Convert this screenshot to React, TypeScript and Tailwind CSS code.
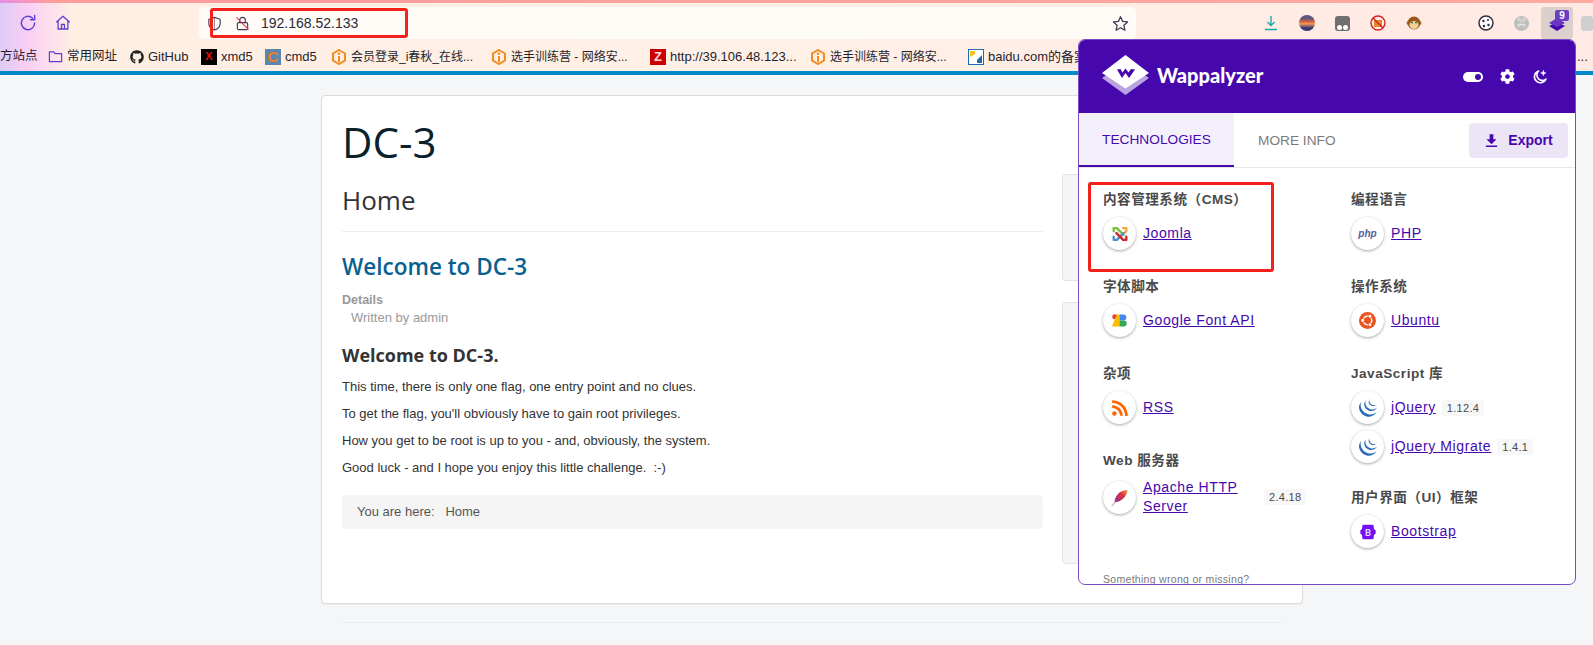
import React from 'react';
import { FaGithub, FaRss } from 'react-icons/fa';
import { SiJquery } from 'react-icons/si';

const ICHUNQIU = (
    <svg viewBox="0 0 16 16" className="h-[16px] w-[16px] shrink-0">
        <path d="M8 1 14 4.500V11.500L8 15 2 11.500V4.500Z" fill="none" stroke="#f58a1f" strokeWidth="2" />
        <rect x="7" y="7" width="2" height="6" fill="#f58a1f" />
        <circle cx="8" cy="4.800" r="1.300" fill="#f58a1f" />
    </svg>
);

const Bookmark: React.FC<{ icon: React.ReactNode; label: string; className?: string; labelClass?: string }> = ({ icon, label, className, labelClass }) => (
    <div className={`flex shrink-0 items-center gap-[4px] ${className ?? ''}`}>
        {icon}
        <span className={`whitespace-nowrap ${labelClass ?? ''}`}>{label}</span>
    </div>
);

const Chip: React.FC<{ children: React.ReactNode }> = ({ children }) => (
    <div className="flex h-[33px] w-[33px] shrink-0 items-center justify-center rounded-full bg-white shadow-[0_1px_3px_rgba(0,0,0,0.35)]">
        {children}
    </div>
);

const JoomlaIcon = () => (
    <svg viewBox="0 0 20 20" className="h-[18px] w-[18px]" fill="none" strokeWidth="2.700" strokeLinecap="round" strokeLinejoin="round">
        <path d="M3 7V3.500H6.500L14 11" stroke="#7ac143" />
        <path d="M13.500 3.500H17V7L9 14" stroke="#f9a541" />
        <path d="M3 13V16.500H6.500L14 9" stroke="#5091cd" />
        <path d="M6 9 13.500 16.500H17V13" stroke="#c8282d" />
    </svg>
);

const GoogleFontIcon = () => (
    <svg viewBox="0 0 20 20" className="h-[17px] w-[17px]">
        <circle cx="4.500" cy="5.500" r="3" fill="#ea4335" />
        <path d="M1 17 7 3H10V17Z" fill="#fbbc04" />
        <path d="M10 3H14.500A3.500 3.500 0 0 1 14.500 10H10Z" fill="#4285f4" />
        <path d="M10 10H15A3.500 3.500 0 0 1 15 17H10Z" fill="#34a853" />
    </svg>
);

const UbuntuIcon = () => (
    <svg viewBox="0 0 20 20" className="h-[17px] w-[17px]">
        <circle cx="10" cy="10" r="10" fill="#e95420" />
        <circle cx="10" cy="10" r="5" fill="none" stroke="#fff" strokeWidth="1.800" />
        <circle cx="4.300" cy="10" r="2.700" fill="#e95420" />
        <circle cx="12.900" cy="5" r="2.700" fill="#e95420" />
        <circle cx="12.900" cy="15" r="2.700" fill="#e95420" />
        <circle cx="4.300" cy="10" r="1.700" fill="#fff" />
        <circle cx="12.900" cy="5" r="1.700" fill="#fff" />
        <circle cx="12.900" cy="15" r="1.700" fill="#fff" />
    </svg>
);

const FeatherIcon = () => (
    <svg viewBox="0 0 20 20" className="h-[19px] w-[19px]">
        <defs>
            <linearGradient id="feather" x1="0" y1="1" x2="1" y2="0">
                <stop offset="0" stopColor="#8e2a8a" />
                <stop offset="0.6" stopColor="#e0313a" />
                <stop offset="1" stopColor="#f8a13a" />
            </linearGradient>
        </defs>
        <path d="M18.500 2C13 2 8 5 6 10 5 12 4.800 13 5 15 8 15 11.500 13.500 14 11 16 9 18 6 18.500 2Z" fill="url(#feather)" />
        <path d="M11 8 2 19" stroke="#b25aa8" strokeWidth="0.800" />
    </svg>
);

const BootstrapIcon = () => (
    <svg viewBox="0 0 20 20" className="h-[18px] w-[18px]">
        <path d="M5 2H15C16 2 16.400 3 16.400 4.500 16.400 6.500 17 7.500 18.500 8V12C17 12.500 16.400 13.500 16.400 15.500 16.400 17 16 18 15 18H5C4 18 3.600 17 3.600 15.500 3.600 13.500 3 12.500 1.500 12V8C3 7.500 3.600 6.500 3.600 4.500 3.600 3 4 2 5 2Z" fill="#7211f3" />
        <text x="10" y="14" textAnchor="middle" fontSize="10.500" fontWeight="700" fill="#e3d2fb" fontFamily="Roboto, sans-serif">B</text>
    </svg>
);

const Tech: React.FC<{ icon: React.ReactNode; version?: string; children: React.ReactNode }> = ({ icon, version, children }) => (
    <div className="flex items-center">
        <Chip>{icon}</Chip>
        <a className="ml-[7px] text-[14px] leading-[19px] tracking-[0.6px] text-[#4608ad] underline">{children}</a>
        {version && (
            <span className="ml-[6px] rounded-[3px] bg-[#f7f7f7] px-[5px] text-[11px] leading-[16px] tracking-[0.3px] text-[#4a4a4a]">{version}</span>
        )}
    </div>
);

const Group: React.FC<{ title: string; children: React.ReactNode; className?: string }> = ({ title, children, className }) => (
    <div className={className}>
        <div className="mb-[8px] h-[18px] whitespace-nowrap text-[13.600px] font-bold leading-[18px] tracking-[0.5px] text-[#4a4a4a]">{title}</div>
        <div className="flex flex-col gap-[6px]">{children}</div>
    </div>
);

const Popup = () => (
    <div className="absolute left-[1078px] top-[39px] flex h-[546px] w-[498px] flex-col overflow-hidden rounded-[7px] border border-[#7a4bc6] bg-white">
        <div className="flex h-[73px] shrink-0 items-center bg-[#4608ad] pb-[3px] pl-[23px] pr-[27px]">
            <svg viewBox="0 0 47 40" className="h-[40px] w-[47px]">
                <path d="M0 23 23.500 40 47 23 23.500 7Z" fill="#b9a3e0" />
                <path d="M23.500 0 47 18 23.500 33.500 0 18Z" fill="#fff" />
                <path d="M15 14.500 20 23 23.500 18 27 23 33 14.500 29 14 26.500 17.500 23.500 13.500 20.500 17.500 18.500 14Z" fill="#4608ad" />
            </svg>
            <span className="ml-[8px] font-['Lato',sans-serif] text-[20px] font-black leading-none text-white">Wappalyzer</span>
            <div className="ml-auto flex items-center gap-[17px] pt-[3px]">
                <div className="flex h-[10px] w-[20px] items-center justify-end rounded-full bg-white pr-[2px]">
                    <div className="h-[6px] w-[6px] rounded-full bg-[#4608ad]" />
                </div>
                <svg viewBox="0 0 512 512" className="h-[15px] w-[15px]" fill="#fff">
                    <path d="M487 316l-43-25c4-23 4-47 0-70l43-25c5-3 7-9 6-14-11-36-30-68-55-95-4-4-10-5-15-2l-43 25c-18-16-39-28-61-36V24c0-6-4-11-9-12-37-8-75-8-111 0-5 1-9 6-9 12v50c-22 8-43 20-61 36L86 85c-5-3-11-2-15 2-25 27-44 59-55 95-2 5 1 11 6 14l43 25c-4 23-4 47 0 70l-43 25c-5 3-8 9-6 14 11 36 30 68 55 95 4 4 10 5 15 2l43-25c18 16 39 28 61 36v50c0 6 4 11 9 12 37 8 75 8 111 0 5-1 9-6 9-12v-50c22-8 43-20 61-36l43 25c5 3 11 2 15-2 25-27 44-59 55-95 1-5-1-11-6-14zM256 336c-44 0-80-36-80-80s36-80 80-80 80 36 80 80-36 80-80 80z" />
                </svg>
                <svg viewBox="0 0 24 24" className="h-[16px] w-[16px]" fill="none" stroke="#fff" strokeWidth="2.400" strokeLinejoin="round">
                    <path d="M10 3A9 9 0 1 0 21 15 8 8 0 0 1 10 3Z" />
                    <path d="M17 2 18 5 21 6 18 7 17 10 16 7 13 6 16 5Z" fill="#fff" strokeWidth="0.800" />
                </svg>
            </div>
        </div>
        <div className="flex h-[55px] shrink-0 items-stretch border-b border-[#e6e6e6]">
            <div className="flex w-[155px] items-center justify-center border-b-2 border-[#4608ad] bg-[#f3f0fb] pt-[2px] text-[13.700px] text-[#4608ad]">TECHNOLOGIES</div>
            <div className="flex items-center pl-[24px] pt-[2px] text-[13.700px] text-[#7a7a7a]">MORE INFO</div>
            <div className="ml-auto mr-[7px] mt-[10px] flex h-[35px] w-[99px] items-center justify-center gap-[9px] rounded-[4px] bg-[#ece5f6] text-[14px] font-bold text-[#4608ad]">
                <svg viewBox="0 0 24 24" className="h-[15px] w-[15px]" fill="#4608ad">
                    <path d="M9 2H15V10H20L12 18 4 10H9ZM3 20H21V22.500H3Z" />
                </svg>
                Export
            </div>
        </div>
        <div className="grid grid-cols-[248px_1fr] pl-[24px] pt-[23px]">
            <div className="flex flex-col">
                <Group title="内容管理系统（CMS）" className="h-[87px]">
                    <Tech icon={<JoomlaIcon />}>Joomla</Tech>
                </Group>
                <Group title="字体脚本" className="h-[87px]">
                    <Tech icon={<GoogleFontIcon />}>Google Font API</Tech>
                </Group>
                <Group title="杂项" className="h-[87px]">
                    <Tech icon={<FaRss className="h-[18px] w-[18px] text-[#ff6600]" />}>RSS</Tech>
                </Group>
                <Group title="Web 服务器">
                    <div className="flex items-center">
                        <Chip><FeatherIcon /></Chip>
                        <a className="ml-[7px] w-[108px] text-[14px] leading-[19px] tracking-[0.6px] text-[#4608ad] underline">Apache HTTP Server</a>
                        <span className="ml-[13px] rounded-[3px] bg-[#f7f7f7] px-[5px] text-[11px] leading-[16px] tracking-[0.3px] text-[#4a4a4a]">2.4.18</span>
                    </div>
                </Group>
            </div>
            <div className="flex flex-col">
                <Group title="编程语言" className="h-[87px]">
                    <Tech icon={<span className="text-[10px] font-bold italic text-[#5a5f99]">php</span>}>PHP</Tech>
                </Group>
                <Group title="操作系统" className="h-[87px]">
                    <Tech icon={<UbuntuIcon />}>Ubuntu</Tech>
                </Group>
                <Group title="JavaScript 库" className="h-[124px]">
                    <Tech icon={<SiJquery className="h-[18px] w-[18px] text-[#2a6ab8]" />} version="1.12.4">jQuery</Tech>
                    <Tech icon={<SiJquery className="h-[18px] w-[18px] text-[#2a6ab8]" />} version="1.4.1">jQuery Migrate</Tech>
                </Group>
                <Group title="用户界面（UI）框架">
                    <Tech icon={<BootstrapIcon />}>Bootstrap</Tech>
                </Group>
            </div>
        </div>
        <div className="mt-[24px] pl-[24px] text-[10.500px] leading-[14px] tracking-[0.3px] text-[#7a7a7a]">Something wrong or missing?</div>
    </div>
);

const Toolbar = () => (
    <div className="relative flex h-[32px] shrink-0 items-center">
        <svg viewBox="0 0 24 24" className="ml-[18px] h-[20px] w-[20px]" fill="none" stroke="#5b3fd6" strokeWidth="1.700" strokeLinecap="round" strokeLinejoin="round">
            <path d="M20 12A8 8 0 1 1 17.500 6.200" />
            <path d="M20 3V8H15" />
        </svg>
        <svg viewBox="0 0 24 24" className="ml-[16px] h-[18px] w-[18px]" fill="none" stroke="#5b3fd6" strokeWidth="1.700" strokeLinejoin="round">
            <path d="M3 11 12 3 21 11M5.500 9V20H18.500V9" />
            <path d="M10 20V14H14V20" />
        </svg>
        <div className="ml-[127px] flex h-[32px] w-[938px] items-center rounded-[5px] bg-[#fffbf7] pl-[8px]">
            <svg viewBox="0 0 16 16" className="h-[15px] w-[15px]" fill="none" stroke="#3c3a55" strokeWidth="1.200">
                <path d="M8 1.500 14 3.500V8C14 11.500 11 14 8 15 5 14 2 11.500 2 8V3.500Z" />
                <path d="M8 1.500V15" strokeWidth="0.600" />
            </svg>
            <svg viewBox="0 0 16 16" className="ml-[13px] h-[15px] w-[15px]" fill="none" stroke="#3c3a55" strokeWidth="1.200">
                <rect x="2.500" y="7" width="11" height="7.500" rx="1.500" />
                <path d="M5 7V4.500A3 3 0 0 1 11 4.500V7" />
                <path d="M1.500 1.500 14.500 14.500" stroke="#e8335a" strokeWidth="1.100" />
            </svg>
            <span className="ml-[11px] text-[14px] text-[#2a2a3a]">192.168.52.133</span>
            <svg viewBox="0 0 24 24" className="ml-auto mr-[7px] h-[17px] w-[17px]" fill="none" stroke="#3c3a55" strokeWidth="1.800" strokeLinejoin="round">
                <path d="M12 2.500 15 9 22 9.800 16.800 14.500 18.200 21.500 12 18 5.800 21.500 7.200 14.500 2 9.800 9 9Z" />
            </svg>
        </div>
        <svg viewBox="0 0 16 16" className="ml-[127px] h-[16px] w-[16px]" fill="none" stroke="#12a9a9" strokeWidth="1.300">
            <path d="M8 1V10M4.500 7 8 10.500 11.500 7M2 14.500H14" />
        </svg>
        <div className="ml-[20px] h-[16px] w-[16px] rounded-full bg-[linear-gradient(#59577e_20%,#e2693a_45%,#f0a060_55%,#3a3a70_80%)]" />
        <div className="ml-[20px] flex h-[15px] w-[15px] items-end justify-center gap-px rounded-[3px] bg-[#6f6f6f] pb-px">
            <div className="h-[5px] w-[5px] rounded-full bg-white" />
            <div className="h-[5px] w-[5px] rounded-full bg-white" />
        </div>
        <svg viewBox="0 0 16 16" className="ml-[20px] h-[16px] w-[16px]">
            <rect x="4" y="5" width="8" height="7" fill="#e08a2a" />
            <circle cx="8" cy="8" r="7" fill="none" stroke="#d81f26" strokeWidth="1.400" />
            <path d="M3 3 13 13" stroke="#d81f26" strokeWidth="1.400" />
        </svg>
        <svg viewBox="0 0 16 16" className="ml-[20px] h-[16px] w-[16px]">
            <circle cx="2.500" cy="8" r="2" fill="#b5702a" />
            <circle cx="13.500" cy="8" r="2" fill="#b5702a" />
            <circle cx="8" cy="8" r="6.500" fill="#9a5a1e" />
            <ellipse cx="8" cy="10" rx="4.500" ry="4" fill="#f0d29a" />
            <circle cx="6" cy="7.500" r="1" fill="#3c7a50" />
            <circle cx="10" cy="7.500" r="1" fill="#3c7a50" />
        </svg>
        <svg viewBox="0 0 16 16" className="ml-[56px] h-[16px] w-[16px]">
            <circle cx="8" cy="8" r="7" fill="#fff" stroke="#33303a" strokeWidth="1.500" />
            <circle cx="5.500" cy="6" r="1.200" fill="#33303a" />
            <circle cx="10" cy="5" r="1" fill="#33303a" />
            <circle cx="6" cy="11" r="1.200" fill="#33303a" />
            <circle cx="10.500" cy="10" r="1.200" fill="#33303a" />
        </svg>
        <div className="ml-[20px] flex h-[15px] w-[15px] items-center justify-center rounded-full bg-[#bdbdbd] text-[9px] leading-none text-white">⌘</div>
        <div className="relative ml-[12px] h-[32px] w-[32px] shrink-0 rounded-[3px] bg-[#dcd0cc]">
            <svg viewBox="0 0 16 14" className="absolute left-[8px] top-[10px] h-[14px] w-[16px]" fill="#4608ad">
                <path d="M8 5 16 9 8 14 0 9Z" />
                <path d="M8 1 16 6 8 10 0 6Z" fill="#6a35c0" />
            </svg>
            <div className="absolute left-[14px] top-[3px] h-[11px] w-[14px] rounded-[2px] bg-[#6b3fc4] text-center text-[10px] font-bold leading-[11px] text-white">9</div>
        </div>
        <div className="ml-[8px] h-[15px] w-[12px] shrink-0 rounded-[3px] bg-[#cfcfcf]" />
    </div>
);

const Bookmarks = () => (
    <div className="relative flex h-[32px] shrink-0 items-center overflow-hidden whitespace-nowrap pt-[3px] text-[13px] text-[#1f1f2e]">
        <span className="w-[48px] shrink-0 text-[12.500px]">方站点</span>
        <Bookmark
            icon={
                <svg viewBox="0 0 16 16" className="h-[15px] w-[15px]" fill="none" stroke="#5b3fd6" strokeWidth="1.300" strokeLinejoin="round">
                    <path d="M1.500 3H6L7.500 5H14.500V13.500H1.500Z" />
                </svg>
            }
            label="常用网址"
            labelClass="text-[12.500px]"
            className="w-[82px]"
        />
        <Bookmark icon={<FaGithub className="h-[14px] w-[14px] text-[#222]" />} label="GitHub" className="w-[71px]" />
        <Bookmark
            icon={
                <div className="flex h-[16px] w-[16px] items-center justify-center bg-black text-[11px] font-bold leading-none text-[#e01010]">X</div>
            }
            label="xmd5"
            className="w-[64px]"
        />
        <Bookmark
            icon={
                <div className="flex h-[16px] w-[16px] items-center justify-center bg-[#5d87ae] text-[15px] font-bold leading-none text-[#f57c1f]">C</div>
            }
            label="cmd5"
            className="w-[66px]"
        />
        <Bookmark icon={ICHUNQIU} label="会员登录_i春秋_在线..." labelClass="text-[12px]" className="w-[160px]" />
        <Bookmark icon={ICHUNQIU} label="选手训练营 - 网络安..." labelClass="text-[12px]" className="w-[159px]" />
        <Bookmark
            icon={
                <div className="flex h-[16px] w-[16px] items-center justify-center bg-[#cc0000] text-[13px] font-bold leading-none text-[#ffd8d8]">Z</div>
            }
            label="http://39.106.48.123..."
            className="w-[160px]"
        />
        <Bookmark icon={ICHUNQIU} label="选手训练营 - 网络安..." labelClass="text-[12px]" className="w-[158px]" />
        <Bookmark
            icon={
                <svg viewBox="0 0 16 16" className="h-[16px] w-[16px]">
                    <rect x="0.500" y="0.500" width="15" height="15" fill="#fff" stroke="#1e6bb0" />
                    <path d="M2 2H7V5L2 8Z" fill="#f5c518" />
                    <path d="M14 6V14H9V11Z" fill="#1e6bb0" />
                    <path d="M7 2H9V14H7Z" fill="#fff" />
                </svg>
            }
            label="baidu.com的备案"
        />
        <span className="absolute left-[1577px]">...</span>
    </div>
);

const ContentCard = () => (
    <div className="ml-[321px] flex h-[509px] w-[982px] gap-[19px] rounded-[4px] border border-[#dcdcdc] bg-white p-[20px] shadow-[0_1px_1px_rgba(0,0,0,0.05)]">
        <div className="w-[701px] shrink-0 text-[13px] text-[#333]">
            <h1 className="-mt-[2px] font-['Open_Sans',sans-serif] text-[42px] leading-[56px] text-[#0b1f2c]">DC-3</h1>
            <h2 className="mt-[14px] border-b border-[#eeeeee] pb-[15px] font-['Open_Sans',sans-serif] text-[26px] font-medium leading-[32px] text-[#333]">Home</h2>
            <h3 className="mt-[19px] font-['Open_Sans',sans-serif] text-[22.500px] font-semibold leading-[32px] text-[#08618d]">Welcome to DC-3</h3>
            <div className="mt-[8px] text-[12.500px] font-bold leading-[18px] text-[#999]">Details</div>
            <div className="pl-[9px] leading-[18px] text-[#999]">Written by admin</div>
            <h4 className="mt-[16px] font-['Open_Sans',sans-serif] text-[18px] font-bold leading-[24px] text-[#333]">Welcome to DC-3.</h4>
            <div className="mt-[11px] flex flex-col gap-[9px] leading-[18px]">
                <p>This time, there is only one flag, one entry point and no clues.</p>
                <p>To get the flag, you&apos;ll obviously have to gain root privileges.</p>
                <p>How you get to be root is up to you - and, obviously, the system.</p>
                <p>Good luck - and I hope you enjoy this little challenge.&nbsp; :-)</p>
            </div>
            <div className="mt-[18px] flex h-[34px] items-center rounded-[4px] bg-[#f5f5f5] pl-[15px] text-[#555]">
                You are here:&nbsp;&nbsp; Home
            </div>
        </div>
        <div className="flex w-[220px] shrink-0 flex-col gap-[21px] pt-[58px]">
            <div className="h-[107px] rounded-[4px] border border-[#e3e3e3] bg-[#f5f5f5]" />
            <div className="h-[262px] rounded-[4px] border border-[#e3e3e3] bg-[#f5f5f5]" />
        </div>
    </div>
);

export default function App() {
    return (
        <div className="relative flex h-screen w-full flex-col overflow-hidden bg-[#f4f6f8] font-['Liberation_Sans','Noto_Sans_CJK_SC',sans-serif]">
            <div className="h-[3px] shrink-0 bg-[linear-gradient(90deg,#e58fe6_0,#ff9c9c_3%,#ffa9a1_100%)]" />
            <div className="flex shrink-0 flex-col bg-[linear-gradient(90deg,#dccdf6_0,#f7cdf4_24px,#fcd9f0_42px,#ffeee2_72px,#fff0e6_50%,#ffe9e4_100%)]">
                <div className="h-[4px] shrink-0" />
                <Toolbar />
                <Bookmarks />
            </div>
            <div className="h-[4px] shrink-0 bg-[#0089c9]" />
            <div className="pt-[20px]">
                <ContentCard />
                <div className="ml-[342px] mt-[18px] w-[940px] border-t border-[#e9ebee]" />
            </div>
            <Popup />
            {/* red annotation boxes drawn over the screenshot */}
            <div className="absolute left-[210px] top-[8px] h-[30px] w-[198px] rounded-[3px] border-[3px] border-[#f5201a]" />
            <div className="absolute left-[1088px] top-[182px] h-[90px] w-[186px] rounded-[3px] border-[3px] border-[#f5201a]" />
        </div>
    );
}
